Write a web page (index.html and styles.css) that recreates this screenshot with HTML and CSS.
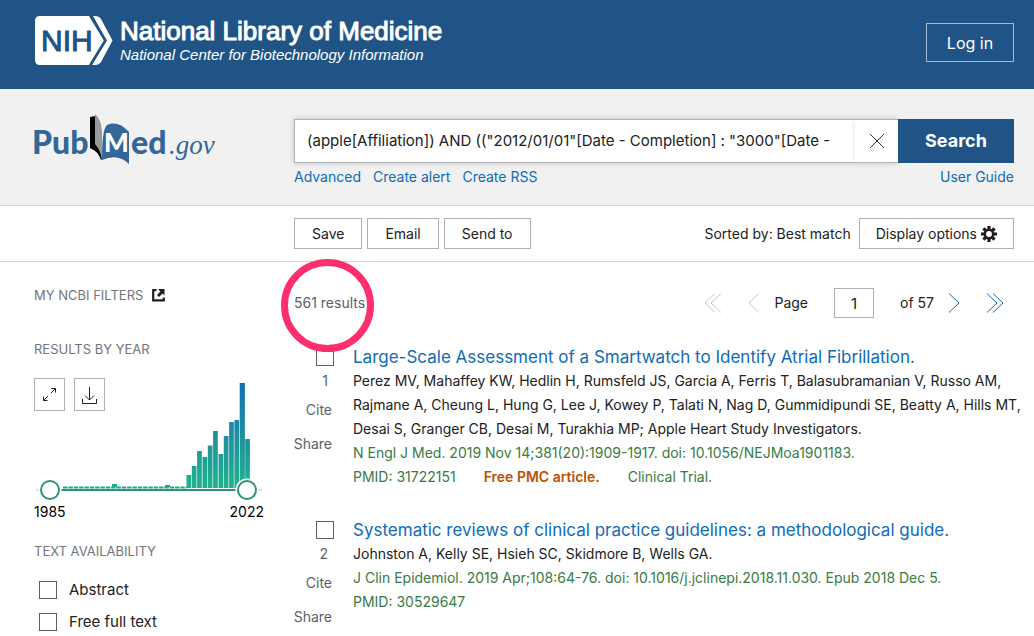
FILE: index.html
```html
<!DOCTYPE html>
<html lang="en">
<head>
<meta charset="utf-8">
<meta name="viewport" content="width=device-width, initial-scale=1">
<title>PubMed search results</title>
<link rel="stylesheet" href="styles.css">
</head>
<body>
<header class="site-header">
  <a class="nlm-brand" href="#">
    <svg class="nih-logo" viewBox="0 0 78 50" role="img" aria-label="NIH">
      <path d="M5 0H54L69 24.500L54 49H5Q0 49 0 44V5Q0 0 5 0Z" fill="#fff"/>
      <path d="M58 0H60Q64 0 66 3L77.500 24.500L66 46Q64 49 60 49H57L71.500 24.500Z" fill="#fff"/>
      <path d="M56 0L70.500 24.500L55.500 49" fill="none" stroke="#205486" stroke-width="2.500"/>
      <text class="nih-text" x="6" y="35">NIH</text>
    </svg>
    <span class="nlm-names">
      <span class="nlm-title">National Library of Medicine</span>
      <span class="nlm-subtitle">National Center for Biotechnology Information</span>
    </span>
  </a>
  <button class="login" type="button">Log in</button>
</header>

<form class="search-band columns">
  <a class="pubmed-brand" href="#">
    <svg class="pubmed-logo" viewBox="0 0 184 54" role="img" aria-label="PubMed.gov">
      <path d="M68 47Q68 16 73 12Q84 7 95 19V51Q84 40 68 47Z" fill="#336699"/>
      <path d="M56 4L61 3L64 34Q67 39 68 46L67 47Q64 38 56 35Z" fill="#000"/>
      <path d="M61 1Q67 6 68 18V46Q67 38 61 31Z" fill="#999"/>
      <text class="logo-word" x="-2" y="41">Pub</text>
      <text class="logo-m" x="70" y="39">M</text>
      <text class="logo-word" x="97" y="41">ed</text>
      <text class="logo-gov" x="135" y="41">.gov</text>
    </svg>
  </a>
  <div class="search-area">
    <div class="search-row">
      <div class="search-field">
        <input class="search-input" type="text" aria-label="Search term" value='(apple[Affiliation]) AND (("2012/01/01"[Date - Completion] : "3000"[Date - Completion]))'>
        <button class="clear" type="button" aria-label="Clear search">
          <svg width="16" height="16" viewBox="0 0 16 16"><path d="M1 1L15 15M15 1L1 15" stroke="#333" fill="none"/></svg>
        </button>
      </div>
      <button class="search-button" type="submit">Search</button>
    </div>
    <nav class="search-links">
      <a href="#">Advanced</a>
      <a href="#">Create alert</a>
      <a href="#">Create RSS</a>
      <a class="guide" href="#">User Guide</a>
    </nav>
  </div>
</form>

<div class="toolbar columns">
  <div class="actions">
    <button class="action" type="button">Save</button>
    <button class="action" type="button">Email</button>
    <button class="action" type="button">Send to</button>
    <span class="sorted">Sorted by: Best match</span>
    <button class="action display" type="button">Display options
      <svg width="16" height="16" viewBox="0 0 16 16">
        <g stroke="#212121" stroke-width="3.200"><path d="M8 0V16M0 8H16M2.400 2.400L13.600 13.600M13.600 2.400L2.400 13.600"/></g>
        <circle cx="8" cy="8" r="4.200" fill="#fff" stroke="#212121" stroke-width="2.600"/>
      </svg>
    </button>
  </div>
</div>

<div class="content columns">
  <aside class="sidebar">
    <h2 class="side-title filters-title">MY NCBI FILTERS
      <svg width="13" height="13" viewBox="0 0 13 13"><path d="M4.500 1.200H1.200V11.300H11.800V8.500" fill="none" stroke="#212121" stroke-width="2.200"/><path d="M6 0H12.500V6.500L10.500 4.500L7 8L5 6L8.300 2.400Z" fill="#212121"/></svg>
    </h2>
    <h2 class="side-title year-title">RESULTS BY YEAR</h2>
    <div class="timeline">
      <div class="chart-buttons">
        <button class="square" type="button" aria-label="Expand">
          <svg width="15" height="15" viewBox="0 0 15 15"><path d="M9 6L13.500 1.500M9.500 1.500H13.500V5.500M6 9L1.500 13.500M1.500 9.500V13.500H5.500" fill="none" stroke="#212121"/></svg>
        </button>
        <button class="square" type="button" aria-label="Download">
          <svg width="17" height="18" viewBox="0 0 17 18"><path d="M8.500 1V14M4 9.500L8.500 14L13 9.500M1.500 13V17.500H15.500V13" fill="none" stroke="#212121"/></svg>
        </button>
      </div>
      <svg class="chart" viewBox="0 0 230 122" role="img" aria-label="Results by year, 1985 to 2022">
        <defs>
          <linearGradient id="depth" gradientUnits="userSpaceOnUse" x1="0" y1="5" x2="0" y2="110">
            <stop offset="0" stop-color="#0f71b7"/>
            <stop offset="0.500" stop-color="#208f9f"/>
            <stop offset="1" stop-color="#20b28f"/>
          </linearGradient>
        </defs>
        <path d="M2 112H228" stroke="#ddd" stroke-width="2"/>
        <path d="M29 109.500H153" stroke="#20a889" stroke-width="2" stroke-dasharray="4.500 0.830"/>
        <path d="M78 106h5v3h-5zM131 107h5v2h-5z" fill="#20a889"/>
        <path fill="url(#depth)" d="M152.500 97h4.700v13h-4.700zM157.800 88h4.700v22h-4.700zM163.100 73h4.700v37h-4.700zM168.500 79h4.700v31h-4.700zM173.800 67.500h4.700v42.500h-4.700zM179.100 53h4.700v57h-4.700zM184.500 76h4.700v34h-4.700zM189.800 58h4.700v52h-4.700zM195.100 44h4.700v66h-4.700zM200.400 42h4.700v68h-4.700zM205.700 5h5.200v105h-5.200zM211.200 61h4.700v49h-4.700z"/>
        <path d="M16 112H213" stroke="#329079" stroke-width="2"/>
        <g fill="#fff" stroke="#fff" stroke-width="4"><circle cx="16" cy="112" r="9.500"/><circle cx="213" cy="112" r="9.500"/></g>
        <g fill="#fff" stroke="#329079" stroke-width="2"><circle cx="16" cy="112" r="9"/><circle cx="213" cy="112" r="9"/></g>
      </svg>
      <div class="years"><span>1985</span><span>2022</span></div>
    </div>
    <h2 class="side-title">TEXT AVAILABILITY</h2>
    <div class="options">
      <label class="option"><input class="box" type="checkbox">Abstract</label>
      <label class="option"><input class="box" type="checkbox">Free full text</label>
    </div>
  </aside>

  <main class="results">
    <div class="results-top">
      <div class="amount">561 results<span class="highlight"></span></div>
      <div class="pager">
        <button class="page-arrow" type="button" aria-label="First page" disabled><svg width="18" height="20" viewBox="0 0 18 20"><path d="M11 0.500L1 10L11 19.500M17 0.500L7 10L17 19.500"/></svg></button>
        <button class="page-arrow previous" type="button" aria-label="Previous page" disabled><svg width="12" height="20" viewBox="0 0 12 20"><path d="M11 0.500L1 10L11 19.500"/></svg></button>
        <label class="page-label" for="page">Page</label>
        <input class="page-number" id="page" type="text" value="1">
        <span class="page-total">of 57</span>
        <button class="page-arrow next" type="button" aria-label="Next page"><svg width="12" height="20" viewBox="0 0 12 20"><path d="M1 0.500L11 10L1 19.500"/></svg></button>
        <button class="page-arrow last" type="button" aria-label="Last page"><svg width="18" height="20" viewBox="0 0 18 20"><path d="M1 0.500L11 10L1 19.500M7 0.500L17 10L7 19.500"/></svg></button>
      </div>
    </div>

    <article class="result">
      <div class="result-actions">
        <input class="box" type="checkbox" id="r1" aria-label="Select result 1">
        <label class="position" for="r1">1</label>
        <button class="text-button" type="button">Cite</button>
        <button class="text-button" type="button">Share</button>
      </div>
      <div class="result-body">
        <a class="result-title" href="#">Large-Scale Assessment of a Smartwatch to Identify Atrial Fibrillation.</a>
        <p class="authors">Perez MV, Mahaffey KW, Hedlin H, Rumsfeld JS, Garcia A, Ferris T, Balasubramanian V, Russo AM,<br>Rajmane A, Cheung L, Hung G, Lee J, Kowey P, Talati N, Nag D, Gummidipundi SE, Beatty A, Hills MT,<br>Desai S, Granger CB, Desai M, Turakhia MP; Apple Heart Study Investigators.</p>
        <p class="citation">N Engl J Med. 2019 Nov 14;381(20):1909-1917. doi: 10.1056/NEJMoa1901183.</p>
        <p class="citation tags"><span>PMID: 31722151</span><span class="free">Free PMC article.</span><span>Clinical Trial.</span></p>
      </div>
    </article>

    <article class="result">
      <div class="result-actions">
        <input class="box" type="checkbox" id="r2" aria-label="Select result 2">
        <label class="position" for="r2">2</label>
        <button class="text-button" type="button">Cite</button>
        <button class="text-button" type="button">Share</button>
      </div>
      <div class="result-body">
        <a class="result-title" href="#">Systematic reviews of clinical practice guidelines: a methodological guide.</a>
        <p class="authors">Johnston A, Kelly SE, Hsieh SC, Skidmore B, Wells GA.</p>
        <p class="citation">J Clin Epidemiol. 2019 Apr;108:64-76. doi: 10.1016/j.jclinepi.2018.11.030. Epub 2018 Dec 5.</p>
        <p class="citation">PMID: 30529647</p>
      </div>
    </article>
  </main>
</div>
</body>
</html>
```
FILE: styles.css
```css
* { box-sizing: border-box; }
body {
  margin: 0;
  background: #fff;
  color: #212121;
  font: 14px/24px Inter, "Liberation Sans", sans-serif;
}
a { color: #0f6cb6; text-decoration: none; }
button, input { font: inherit; color: inherit; }
button { padding: 0; border: 0; background: none; }
svg { display: block; flex: none; }
h2, p { margin: 0; }

.columns {
  display: grid;
  grid-template-columns: 260px minmax(0, 1fr);
  padding: 0 20px 0 34px;
}

.site-header {
  display: flex;
  justify-content: space-between;
  align-items: flex-start;
  height: 89px;
  padding: 16px 20px 0 35px;
  background: #205486;
}
.nlm-brand { display: flex; gap: 7px; color: #fff; }
.nih-logo { width: 78px; height: 50px; }
.nih-text { font: 30px "Liberation Sans", sans-serif; fill: #205486; stroke: #205486; stroke-width: 1px; }
.nlm-names { display: flex; flex-direction: column; font-family: "Liberation Sans", sans-serif; white-space: nowrap; }
.nlm-title { font-size: 26px; line-height: 30px; -webkit-text-stroke: 1px #fff; }
.nlm-subtitle { font-size: 15px; line-height: 18px; font-style: italic; }
.login {
  width: 88px;
  height: 39px;
  margin-top: 7px;
  border: 1px solid #a6bbcf;
  color: #fff;
  font-size: 16px;
  line-height: 20px;
}

.search-band { height: 117px; background: #f1f1f1; border-bottom: 1px solid #d6d7d9; }
.pubmed-brand { padding-top: 24px; }
.pubmed-logo { width: 184px; height: 54px; overflow: visible; }
.logo-word { font: 900 32px Lato, sans-serif; fill: #336699; }
.logo-m { font: 900 26px Lato, sans-serif; fill: #fff; }
.logo-gov { font: italic 27px "Liberation Serif", serif; fill: #336699; }
.search-area { padding-top: 30px; }
.search-row { display: flex; height: 44px; }
.search-field {
  display: flex;
  flex: 1;
  min-width: 0;
  background: #fff;
  border: 1px solid #aeb0b5;
  border-right: 0;
  box-shadow: 0 0 6px rgba(0, 0, 0, 0.2);
}
.search-input {
  flex: 1;
  min-width: 0;
  margin: 0 22px 0 12px;
  padding: 0;
  border: 0;
  background: none;
  font-size: 15px;
}
.clear {
  display: grid;
  place-items: center;
  width: 43px;
  box-shadow: -4px 0 4px -2px #eee;
}
.search-button {
  width: 116px;
  background: #205486;
  color: #fff;
  font-size: 18px;
  font-weight: 700;
}
.search-links { display: flex; gap: 12px; padding-top: 2px; }
.guide { margin-left: auto; }

.toolbar { height: 56px; align-items: center; border-bottom: 1px solid #d6d7d9; }
.actions { grid-column: 2; display: flex; align-items: center; gap: 5px; }
.action {
  display: flex;
  align-items: center;
  height: 31px;
  padding: 0 17px;
  border: 1px solid #aeb0b5;
  background: #fff;
}
.sorted { margin-left: auto; }
.display { gap: 4px; margin-left: 3px; padding: 0 16px; }

.sidebar { padding-top: 21px; }
.side-title { color: #72757b; font-size: 13px; font-weight: 400; }
.filters-title { display: flex; align-items: center; gap: 9px; margin-bottom: 30px; }
.year-title { margin-bottom: 17px; }
.timeline { display: grid; width: 230px; margin-bottom: 15px; }
.chart-buttons { grid-area: 1 / 1; display: flex; gap: 9px; z-index: 1; height: 33px; }
.square { display: grid; place-items: center; width: 31px; border: 1px solid #aeb0b5; background: #fff; }
.chart { grid-area: 1 / 1; width: 230px; height: 122px; }
.years { display: flex; justify-content: space-between; color: #000; }
.options { display: grid; gap: 8px; padding: 15px 0 0 5px; }
.option { display: flex; align-items: center; gap: 12px; font-size: 15px; }
.box {
  appearance: none;
  width: 18px;
  height: 18px;
  margin: 0;
  border: 1px solid #5b616b;
  background: #fff;
}

.results-top { display: flex; justify-content: space-between; align-items: center; height: 82px; }
.amount { position: relative; color: #5b616b; }
.highlight {
  position: absolute;
  z-index: 1;
  top: -32px;
  left: -13px;
  width: 93px;
  height: 93px;
  border: 7px solid #fe2f6e;
  border-radius: 50%;
}
.pager { display: flex; align-items: center; padding-right: 10px; }
.page-arrow svg { fill: none; stroke: #0f6cb6; }
.page-arrow:disabled svg { stroke: #c4c6ca; }
.previous { margin: 0 14px 0 26px; }
.page-number {
  width: 40px;
  height: 30px;
  margin: 0 26px;
  padding: 0;
  border: 1px solid #aeb0b5;
  text-align: center;
  font-size: 15px;
}
.next { margin: 0 26px 0 14px; }

.result { display: grid; grid-template-columns: 38px minmax(0, 1fr); gap: 21px; margin-bottom: 28px; }
.result-actions { display: flex; flex-direction: column; align-items: flex-end; color: #5b616b; }
.result-actions .box { margin: 4px -2px 4px 0; }
.position { padding-right: 4px; line-height: 22px; }
.text-button { line-height: 24px; margin-top: 6px; }
.text-button + .text-button { margin-top: 10px; }
.result-title { display: block; padding-top: 1px; line-height: 24px; font-size: 17px; }
.authors { white-space: nowrap; }
.citation { color: #3a7a44; }
.tags { display: flex; gap: 28px; }
.free { color: #bd4f05; font-weight: 600; }
```
